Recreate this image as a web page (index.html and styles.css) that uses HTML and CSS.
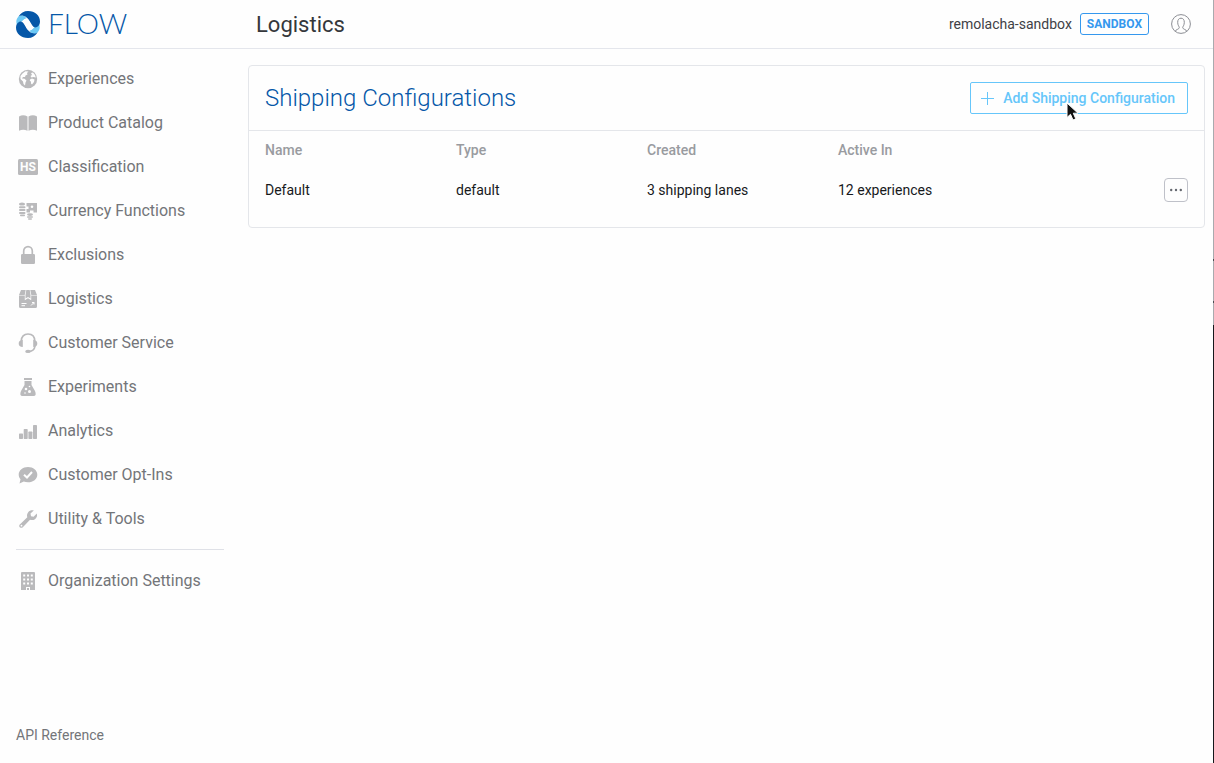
FILE: index.html
```html
<!DOCTYPE html>
<html lang="en">
<head>
<meta charset="utf-8">
<title>Logistics</title>
<link rel="stylesheet" href="styles.css">
</head>
<body>
<div class="app">
  <header class="topbar">
    <a class="brand" href="#">
      <svg class="brand-mark" viewBox="0 0 24 27" aria-hidden="true">
        <path fill="#6cc9f5" d="M2.500 5.500C5 3.300 8.500 4 10.500 7.500C8 7.500 6.500 10.500 3.500 12L1 14C-.3 11 .3 7.800 2.500 5.500ZM21.500 21.500C19 23.700 15.500 23 13.500 19.500C16 19.500 17.500 16.500 20.500 15L23 13C24.300 16 23.700 19.200 21.500 21.500Z"/>
        <path fill="#0557a8" d="M2.500 5.500C4.500 2 8 0 12 0C19 0 24 4.500 24 10.500C24 13 23 15 21 16C18.500 17.200 17.300 16 16 14C14 11 13 8 10 6C7.500 4.300 4.500 4 2.500 5.500ZM21.500 21.500C19.500 25 16 27 12 27C5 27 0 22.500 0 16.500C0 14 1 12 3 11C5.500 9.800 6.700 11 8 13C10 16 11 19 14 21C16.500 22.700 19.500 23 21.500 21.500Z"/>
        <path fill="#fefefe" d="M4.500 11.500C7 10.500 8 7.500 10.500 7.500C13.500 7.500 14.500 15.700 18 16.200L19.500 15.500C17 16.500 16 19.500 13.500 19.500C10.500 19.500 9.500 11.300 6 10.800Z"/>
      </svg>
      <span class="brand-name">FLOW</span>
    </a>
    <h1 class="page-title">Logistics</h1>
    <div class="account">
      <span class="org">remolacha-sandbox</span>
      <span class="badge">SANDBOX</span>
      <button class="avatar" type="button" aria-label="Account">
        <svg width="20" height="20" viewBox="0 0 20 20" fill="none" stroke="#8b8d93"><circle cx="10" cy="10" r="9.400"/><path d="M4.200 17.200C4.500 15.600 8.300 15.300 8.300 13.600C8.300 12.600 6.700 11.400 6.700 8.300C6.700 5.600 8 4.200 10 4.200S13.300 5.600 13.300 8.300C13.300 11.400 11.700 12.600 11.700 13.600C11.700 15.300 15.500 15.600 15.800 17.200"/></svg>
      </button>
    </div>
  </header>
  <div class="body">
    <nav class="sidebar">
      <a class="nav-item" href="#"><svg class="icon" viewBox="0 0 20 20"><circle cx="10" cy="10" r="9.200"/><path class="cut" d="M4.500 4.500L7.500 2.300 10.500 2.500 9 4 9.500 5.500 7.500 6.500 7 8 5 8 4 9.500 6.500 9.700 8.500 11.500 7.500 13.500 7 16.500 5.500 15 5 12.500 2.500 10 2.500 7ZM13 4L15 3.500 17 6 17.800 8.500 15.500 8 13.500 8.500 12.500 7 14 6ZM12 10.500L14 9.500 16.500 10.500 16 13 14 15.500 13 14.500 13 12.500 11.800 12Z"/></svg>Experiences</a>
      <a class="nav-item" href="#"><svg class="icon" viewBox="0 0 20 20"><path d="M1 3.500Q5 .8 9.500 3.500V17.800Q5 15.500 1 17.800ZM10.500 3.500Q15 .8 19 3.500V17.800Q15 15.500 10.500 17.800Z"/></svg>Product Catalog</a>
      <a class="nav-item" href="#"><svg class="icon" viewBox="0 0 20 20"><rect y="2" width="20" height="16" rx="1.500"/><text class="icon-text" x="10" y="14" text-anchor="middle">HS</text></svg>Classification</a>
      <a class="nav-item" href="#"><svg class="icon" viewBox="0 0 20 20"><ellipse cx="4" cy="3" rx="3" ry="1.600"/><rect x="1" y="5.300" width="6.500" height="2" rx="1"/><rect x="1" y="8.100" width="6.500" height="2" rx="1"/><rect x="1" y="10.900" width="6.500" height="2" rx="1"/><rect x="2" y="13.600" width="5" height="1.600" rx=".8"/><path d="M8.500 2H19V11.500H15.500V9.500H12V11.500H8.500V8H10.500V5.500H8.500Z"/><circle class="cut" cx="14" cy="5.700" r="1.300"/><ellipse cx="12" cy="13.600" rx="3" ry="1.300"/><rect x="9" y="15.300" width="6" height="1.500" rx=".7"/><rect x="10" y="17.200" width="4" height="1.500" rx=".7"/></svg>Currency Functions</a>
      <a class="nav-item" href="#"><svg class="icon" viewBox="0 0 20 20"><rect x="3" y="9" width="14" height="10" rx="1.200"/><path class="line" d="M5.700 9V6A4.300 4.300 0 0 1 14.300 6V9"/></svg>Exclusions</a>
      <a class="nav-item" href="#"><svg class="icon" viewBox="0 0 20 20"><path d="M3 1H7.700L6.700 6H1ZM8.300 1H11.700L12.500 6V9.500L10 8 7.500 9.500V6ZM12.300 1H17L19 6H13.300ZM1 6.500H6.800V11.200L10 9.200 13.200 11.200V6.500H19V17.500Q19 19 17.500 19H2.500Q1 19 1 17.500Z"/><path class="cut-line" d="M3.500 14.500H8.500M3.500 16.700H7M13 16.500L16 13.500M14 13.500H16V15.500"/></svg>Logistics</a>
      <a class="nav-item" href="#"><svg class="icon" viewBox="0 0 20 20"><path class="line" d="M3.300 8C3.300 3.500 6 1 10 1S16.700 3.500 16.700 8M17 13C16.500 16.500 14.500 18.300 11 18.500"/><path d="M4.800 7V14C2 14 .7 12.700 .7 10.500S2 7 4.800 7ZM15.200 7V14C18 14 19.300 12.700 19.300 10.500S18 7 15.200 7Z"/><ellipse cx="10" cy="18.400" rx="2.800" ry="1.600"/></svg>Customer Service</a>
      <a class="nav-item" href="#"><svg class="icon" viewBox="0 0 20 20"><path d="M6 1H14V3H6ZM6.500 4H13.500V8L17 14Q19 19 15.500 19H4.500Q1 19 3 14L6.500 8Z"/><circle class="cut" cx="8" cy="12" r="1.300"/><circle class="cut" cx="11.500" cy="14.500" r="1.500"/><circle class="cut" cx="7" cy="16" r=".8"/><circle class="cut" cx="11.500" cy="9.500" r=".8"/></svg>Experiments</a>
      <a class="nav-item" href="#"><svg class="icon" viewBox="0 0 20 20"><rect x="1" y="12.500" width="4" height="5.500" rx=".7"/><rect x="5.700" y="8" width="4" height="10" rx=".7"/><rect x="10.400" y="10.500" width="4" height="7.500" rx=".7"/><rect x="15" y="4" width="4" height="14" rx=".7"/></svg>Analytics</a>
      <a class="nav-item" href="#"><svg class="icon" viewBox="0 0 20 20"><path d="M10 2C15.200 2 19.300 5.300 19.300 9.700S15.200 17.300 10 17.300C8.300 17.300 7 17 5.800 16.500L1.500 18.500 2.500 14.200C1.400 13 .7 11.500 .7 9.700.7 5.300 4.800 2 10 2Z"/><path class="cut-line thick" d="M6 9.700L9 12.500 14 7"/></svg>Customer Opt-Ins</a>
      <a class="nav-item" href="#"><svg class="icon" viewBox="0 0 20 20"><path d="M15.800 1.500L12.500 4.500 13 7.200 15.600 7.700 18.800 4.600C19.600 7 18.700 9 17 10.200 15.500 11.200 13.500 11.300 12 10.700L4.800 18.200C2.800 20 0 17.500 1.800 15.400L9.300 8.200C8.700 6.500 9 4.600 10.200 3.200 11.600 1.500 13.700 .9 15.800 1.500Z"/><circle class="cut" cx="3.500" cy="16.700" r=".9"/></svg>Utility &amp; Tools</a>
      <hr class="divider">
      <a class="nav-item" href="#"><svg class="icon" viewBox="0 0 20 20"><path d="M4 1H16Q17 1 17 2V19H12V16H8V19H3V2Q3 1 4 1Z"/><path class="cut" d="M5.200 3.500H7.200V5.500H5.200ZM9 3.500H11V5.500H9ZM12.800 3.500H14.800V5.500H12.800ZM5.200 7.500H7.200V9.500H5.200ZM9 7.500H11V9.500H9ZM12.800 7.500H14.800V9.500H12.800ZM5.200 11.500H7.200V13.500H5.200ZM9 11.500H11V13.500H9ZM12.800 11.500H14.800V13.500H12.800Z"/><path d="M9 17H11V19H9Z"/></svg>Organization Settings</a>
      <a class="api-link" href="#">API Reference</a>
    </nav>
    <main class="content">
      <section class="card">
        <div class="card-head">
          <h2 class="card-title">Shipping Configurations</h2>
          <button class="add-button" type="button">
            <svg width="15" height="15" viewBox="0 0 15 15" stroke="currentColor" aria-hidden="true"><path d="M7.500 1V14M1 7.500H14"/></svg>
            Add Shipping Configuration
          </button>
        </div>
        <table class="table">
          <thead><tr><th>Name</th><th>Type</th><th>Created</th><th>Active In</th><th></th></tr></thead>
          <tbody><tr><td>Default</td><td>default</td><td>3 shipping lanes</td><td>12 experiences</td><td class="actions"><button class="more" type="button" aria-label="More actions"><svg width="12" height="4" viewBox="0 0 12 4" fill="#666970"><circle cx="1.200" cy="2" r="1.200"/><circle cx="6" cy="2" r="1.200"/><circle cx="10.800" cy="2" r="1.200"/></svg></button></td></tr></tbody>
        </table>
      </section>
    </main>
  </div>
  <div class="window-edge"></div>
  <svg class="cursor" width="14" height="20" viewBox="0 0 14 20" aria-hidden="true"><path d="M1 1V15.500L4.500 12.300 7 18 9.800 16.800 7.300 11.200H12Z" fill="#111" stroke="#fff"/></svg>
</div>
</body>
</html>
```

FILE: styles.css
```css
* { box-sizing: border-box; }

body {
  margin: 0;
  background: #fefefe;
  color: #17191c;
  font: 14px/20px Roboto, "Liberation Sans", sans-serif;
}

a { color: inherit; text-decoration: none; }
button { font: inherit; background: none; cursor: pointer; }
h1, h2 { margin: 0; }

.app {
  position: relative;
  display: flex;
  flex-direction: column;
  min-height: 100vh;
}

.topbar {
  display: flex;
  align-items: center;
  height: 49px;
  padding: 0 23px 0 16px;
  border-bottom: 1px solid #e4e6ec;
}

.brand {
  display: flex;
  align-items: center;
  gap: 8px;
  width: 240px;
  color: #0557a8;
}
.brand-mark { width: 24px; height: 27px; }
.brand-name {
  padding-bottom: 2px;
  font: 300 28px/32px Lato, sans-serif;
}

.page-title {
  padding-top: 2px;
  color: #35373b;
  font-size: 22px;
  font-weight: 400;
  line-height: 32px;
}

.account {
  display: flex;
  align-items: center;
  margin-left: auto;
}
.org { color: #3f4146; }
.badge {
  margin-left: 8px;
  padding: 0 6px;
  border: 1px solid #3598ee;
  border-radius: 3px;
  color: #3598ee;
  font-size: 12px;
  font-weight: 700;
}
.avatar {
  display: flex;
  margin-left: 22px;
  padding: 0;
  border: 0;
}

.body { display: flex; flex: 1; }

.sidebar {
  display: flex;
  flex-direction: column;
  width: 240px;
  padding: 8px 16px 16px;
  color: #737579;
}
.nav-item {
  display: flex;
  align-items: center;
  gap: 10px;
  height: 44px;
  padding-left: 2px;
  font-size: 16px;
}
.icon { width: 20px; height: 20px; fill: #bababc; }
.icon .line { fill: none; stroke: #bababc; stroke-width: 1.700; }
.icon .cut { fill: #fefefe; }
.icon .cut-line { fill: none; stroke: #fefefe; stroke-width: 1; }
.icon .thick { stroke-width: 2; }
.icon .icon-text { fill: #fefefe; font-size: 12px; font-weight: 700; }

.divider {
  width: 100%;
  margin: 8px 0 9px;
  border: 0;
  border-top: 1px solid #dfe1e7;
}
.api-link { margin-top: auto; padding: 2px 0; }

.content { flex: 1; padding: 16px 9px 16px 8px; }

.card {
  border: 1px solid #e4e6ea;
  border-radius: 4px;
}
.card-head {
  display: flex;
  align-items: center;
  justify-content: space-between;
  padding: 16px;
  border-bottom: 1px solid #e4e6ea;
}
.card-title {
  color: #0557a8;
  font-size: 24px;
  font-weight: 300;
  line-height: 32px;
}
.add-button {
  display: flex;
  align-items: center;
  gap: 8px;
  height: 32px;
  padding: 0 12px 0 9px;
  border: 1px solid #66c6fa;
  border-radius: 2px;
  color: #66c6fa;
  font-weight: 500;
}

.table {
  width: 100%;
  table-layout: fixed;
  border-collapse: collapse;
  margin-bottom: 17px;
}
.table th,
.table td { padding: 0 16px; text-align: left; }
.table th {
  height: 38px;
  color: #999ba0;
  font-weight: 500;
}
.table td { height: 41px; }
.table .actions { text-align: right; }
.more {
  display: inline-flex;
  align-items: center;
  justify-content: center;
  width: 24px;
  height: 24px;
  padding: 0;
  border: 1px solid #bfc1c9;
  border-radius: 4px;
  vertical-align: middle;
}

.window-edge {
  position: absolute;
  top: 0;
  right: 0;
  bottom: 0;
  width: 1px;
  background: linear-gradient(#a9aaae 259px, #4a4c52 259px 261px, #a9aaae 261px 301px, #4a4c52 301px 303px, #a9aaae 303px 325px, #16181c 325px);
}
.cursor {
  position: absolute;
  top: 102px;
  right: 134px;
  pointer-events: none;
}
```
